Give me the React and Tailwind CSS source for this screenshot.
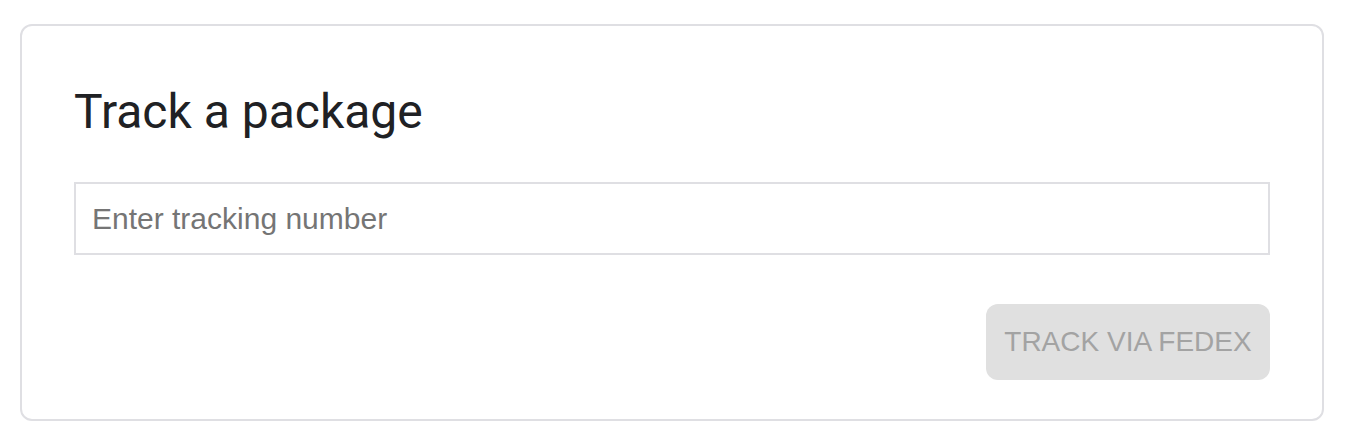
import { useState } from 'react'

export default function App() {
  const [tracking, setTracking] = useState('')

  return (
    <div className="bg-white w-full h-[436px] pt-6 px-5 font-['Liberation_Sans',Arial,sans-serif]">
      <div className="w-[1304px] border-2 border-[#dfdfe3] rounded-xl h-[397px] px-[52px] pt-[58px]">
        <h1 className="font-['Roboto',sans-serif] text-[48px] leading-[56px] text-[#202124]">
          Track a package
        </h1>
        <input
          value={tracking}
          onChange={e => setTracking(e.target.value)}
          placeholder="Enter tracking number"
          className="mt-[42px] block w-full h-[73px] border-2 border-[#dfdfe3] px-4 text-[30px] text-[#202124] placeholder:text-[#757575] outline-none"
        />
        <div className="flex justify-end mt-[49px]">
          <button
            disabled
            className="w-[284px] h-[76px] rounded-xl bg-[#e0e0e0] text-[#a3a3a3] text-[28px]"
          >
            TRACK VIA FEDEX
          </button>
        </div>
      </div>
    </div>
  )
}
